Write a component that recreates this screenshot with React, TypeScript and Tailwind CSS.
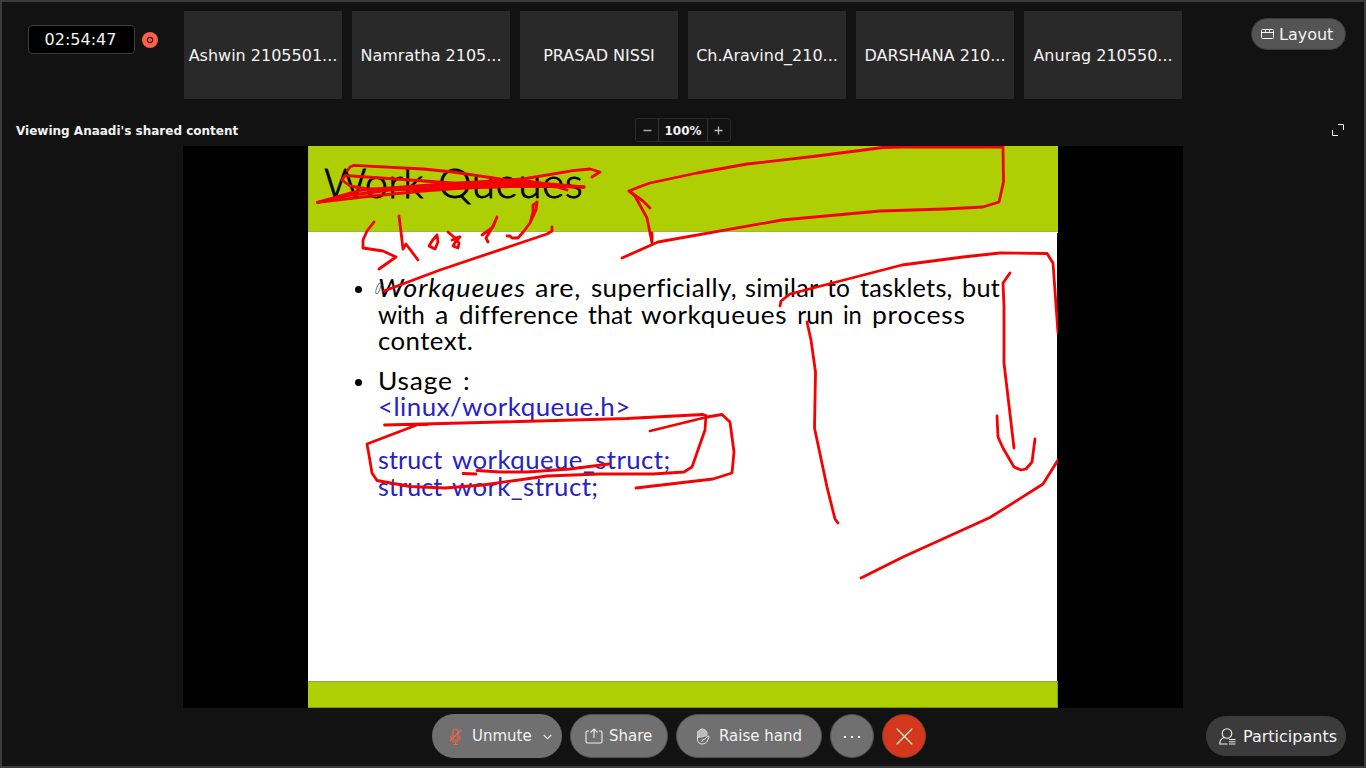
import { useLayoutEffect, useRef } from "react";

const participants = [
  "Ashwin 2105501...",
  "Namratha 2105...",
  "PRASAD NISSI",
  "Ch.Aravind_210...",
  "DARSHANA 210...",
  "Anurag 210550...",
];

/* Fills the given width: a small part by letter spacing, the rest by widening the glyphs. */
function Word({ text, width, italic = false }: { text: string; width: number; italic?: boolean }) {
  const outer = useRef<HTMLSpanElement>(null);
  const inner = useRef<HTMLSpanElement>(null);
  useLayoutEffect(() => {
    if (!outer.current || !inner.current) return;
    const el = inner.current;
    el.style.transform = "none";
    el.style.letterSpacing = "0px";
    const natural = el.offsetWidth;
    const extra = (width - natural) / text.length;
    el.style.letterSpacing = `${extra * 0.4}px`;
    el.style.transform = `scaleX(${width / (natural + extra * 0.4 * text.length)})`;
    outer.current.style.width = `${width}px`;
  }, [text, width]);
  return (
    <span ref={outer} className="inline-block">
      <span ref={inner} className={italic ? "inline-block origin-left italic" : "inline-block origin-left"}>
        {text}
      </span>
    </span>
  );
}

type W = [string, number, boolean?];

function Line({ words, className }: { words: W[]; className: string }) {
  return (
    <div className={`flex h-[26.5px] justify-between leading-[26.5px] whitespace-nowrap ${className}`}>
      {words.map(([t, w, i]) => (
        <Word key={t} text={t} width={w} italic={i} />
      ))}
    </div>
  );
}

function Bullet() {
  return <span className="mt-[11px] ml-[47px] mr-[16px] size-[7px] shrink-0 rounded-full bg-black" />;
}

const strokes = [
  "M347.500 170.500 L350 167 L354 165.300 L423 169 L453 172 L510 180.500 L584 187",
  "M317.500 202.300 L350 193 L363 190 L443 184 L523 179 L573 170.700 L590 169 L600 172 L592 177",
  "M584 187 L523 185 L453 183 L345 175.500 L342 180 L350 186 L367 189 L410 189 L477 187 L523 184 L557 187 L567 190",
  "M317.500 202.300 L363 197 L423 191 L463 188 L523 186 L584 187",
  "M317.500 202.300 L352 195 L390 190 L440 187 L500 184",
  "M374 222 L367 231 L363 240 L363 248 L383 251 L396 257 L379 269",
  "M399 216 L401 232 L403 249 L406 244 L418 260",
  "M437 235 L438 242 L435 249 L429 246 L432 241 L437 235",
  "M448 232 L455 238 L459 237 M460 237 L452 240 M455 238 L459 243 L458 248 L453 246 L456 241 L460 237",
  "M497 217 L493 227 L482 235 M497 217 L492 228 L486 238 L488 242",
  "M537 202 L533 205 L533 212 L530 223 L524 231 L518 238 L512 238 L510 236 L507 236 M537 202 L536 210 L530 223",
  "M384 291 L440 270 L547 234 L552 231 L552 227",
  "M650 208 L643 201 L629 191 L639 187 L650 183 L697 173 L747 164 L817 156 L883 147.500 L903 147 L1003 147 L1003.500 182 L999 202 L983 207 L945 209 L880 211 L782 220 L658 242 L622 258",
  "M629 191 L635 196 L647 218 L652 243 L652 233",
  "M780 306 L781 301 L790 294 L902 265 L963 257 L1000 253 L1047 253.500 L1053 263 L1058 333",
  "M1058 460 L1043 484 L990 517.500 L903 557 L861 578",
  "M1010 273 L1003 283 L1004 307 L1004 363 L1014 448",
  "M997 416 L998 437 L1003 448 L1014 467 L1021 470 L1026 469 L1032 462 L1035 439",
  "M807 322 L811 340 L815.500 372 L814.500 428 L827 487 L835 519 L838 523",
  "M384.500 425 L520 421.500 L627 418.500 L703 414.500 L706 415.500 L705 430 L692 467 L684 472 L653 474 L600 474 L547 476 L483 485 L445 488 L410 486.500 L377 480.500 L372 473 L369 455 L367 444 L418 424.500 L428 424.500",
  "M650 431 L707 417 L722 414.500 L730 422 L734 452 L732 473 L713 479 L636 488",
  "M463 473.500 L476 474",
  "M477 470.500 L500 472 L527 472 L570 469 L609 464",
];

function Slide() {
  return (
    <div className="relative flex h-[562px] w-[750px] flex-col overflow-hidden bg-white font-['Lato',sans-serif]">
      <div className="h-[86px] shrink-0 border-b border-l border-[#9dba35] bg-[#adcf03] pt-[12px] pl-[15px] text-[41px] leading-[50px] font-light text-black [-webkit-text-stroke:0.8px_#000]">
        <div className="flex w-[259px] justify-between whitespace-nowrap">
          <Word text="Work" width={100} />
          <Word text="Queues" width={145} />
        </div>
      </div>
      <div className="mr-px flex grow flex-col bg-white pt-[43px] text-[24.5px] text-black">
        <div className="flex">
          <Bullet />
          <div>
            <Line
              className="w-[622px]"
              words={[["Workqueues", 148, true], ["are,", 46], ["superficially,", 145], ["similar", 73], ["to", 23], ["tasklets,", 93], ["but", 38]]}
            />
            <Line
              className="w-[588px]"
              words={[["with", 47], ["a", 14], ["difference", 119], ["that", 44], ["workqueues", 146], ["run", 36], ["in", 19], ["process", 94]]}
            />
            <Line className="w-[95px]" words={[["context.", 95]]} />
          </div>
        </div>
        <div className="mt-[13px] flex">
          <Bullet />
          <div>
            <Line className="w-[92px]" words={[["Usage", 75], [":", 7]]} />
            <div className="text-[#2722c4]">
              <Line className="w-[253px]" words={[["<linux/workqueue.h>", 253]]} />
              <div className="h-[26.5px]" />
              <Line className="w-[293px]" words={[["struct", 64], ["workqueue_struct;", 219]]} />
              <Line className="w-[220px]" words={[["struct", 64], ["work_struct;", 146]]} />
            </div>
          </div>
        </div>
      </div>
      <div className="h-[27px] shrink-0 border border-t-[#82aa50] border-r-[#82a020] border-b-[#7d9a10] border-l-[#adcf03] bg-[#adcf03]" />
      <svg viewBox="308 146 750 562" className="absolute inset-0 h-[562px] w-[750px]" fill="none">
        <path d="M1057.500 233V681" stroke="#000" strokeWidth="1" />
        <ellipse cx="378.3" cy="288.5" rx="1.7" ry="5.5" transform="rotate(20 378.3 288.5)" fill="#fff" stroke="#68727a" strokeWidth="1" />
        <path d="M440 186 L500 181 L523 179 L550 183 L584 187 L510 188 L440 190 Z" fill="#fa0000" />
        {strokes.map((d) => (
          <path key={d} d={d} stroke="#f40202" strokeWidth="2.8" strokeLinecap="round" strokeLinejoin="round" />
        ))}
      </svg>
    </div>
  );
}

export default function App() {
  return (
    <div className="flex h-[768px] w-[1366px] flex-col overflow-hidden border-2 border-[#3b3b3b] bg-[#121212] font-['DejaVu_Sans',sans-serif] text-[16px] text-[#f3f3f3]">
      <header className="flex h-[97px] shrink-0 items-start">
        <div className="flex w-[180px] shrink-0 items-center pt-[23px] pl-[26px]">
          <div className="flex h-[29px] w-[107px] items-center justify-center rounded border border-[#3c3c3c] bg-black pr-[2px]">02:54:47</div>
          <svg className="ml-[7px] size-4" viewBox="0 0 16 16">
            <circle cx="8" cy="8" r="8" fill="#fa6148" />
            <circle cx="8" cy="8" r="2.6" fill="none" stroke="#301612" strokeWidth="1.1" />
          </svg>
        </div>
        <div className="ml-[2px] flex gap-[10px] pt-[9px]">
          {participants.map((p) => (
            <div key={p} className="flex h-[88px] w-[158px] items-center justify-center bg-[#292929] pt-[2px] whitespace-nowrap">
              {p}
            </div>
          ))}
        </div>
        <button className="mt-[16px] ml-[69px] flex h-[32px] w-[95px] items-center rounded-full border border-[#3c3c3c] bg-[#545454] pl-[9px]">
          <svg className="mr-[5px] h-[12px] w-[13px] shrink-0" viewBox="0 0 13 12" fill="none" stroke="#f5f5f5" strokeWidth="1">
            <rect x=".5" y="1.5" width="12" height="9" rx="1" />
            <path d="M.5 4.5h12M4.5 1.5v3M8.5 1.5v3" />
          </svg>
          <span className="pt-px">Layout</span>
        </button>
      </header>

      <div className="flex h-[47px] shrink-0 items-center pt-[15px] text-[12px] font-bold">
        <div className="w-[619px] pt-[2px] pl-[14px]">Viewing Anaadi's shared content</div>
        <div className="ml-[14px] flex h-6 w-[96px] items-stretch rounded-[3px] border border-[#292929]">
          <button className="flex w-[23px] items-center justify-center border-r border-[#333]">
            <svg viewBox="0 0 9 9" className="size-[9px]" stroke="#aaa" strokeWidth="1.5">
              <path d="M.5 4.5h8" />
            </svg>
          </button>
          <span className="flex w-[49px] items-center justify-center border-r border-[#333] pt-[2px]">100%</span>
          <button className="flex grow items-center justify-center pr-px">
            <svg viewBox="0 0 9 9" className="size-[9px]" stroke="#bbb" strokeWidth="1.3">
              <path d="M.5 4.5h8M4.5 .5v8" />
            </svg>
          </button>
        </div>
        <svg className="ml-[601px] size-3" viewBox="0 0 12 12" fill="none" stroke="#f5f5f5" strokeWidth="1">
          <path d="M6 .5h5.500v5.500M.5 6v5.500h5.500" />
        </svg>
      </div>

      <main className="ml-[181px] flex h-[562px] w-[1000px] shrink-0 bg-black pl-[125px]">
        <Slide />
      </main>

      <footer className="flex h-[58px] shrink-0 items-start pt-[6px] pl-[430px] text-[15px]">
        <button className="flex h-[44px] w-[130px] items-center rounded-full bg-[#707070] pl-[17px]">
          <svg className="mt-[2px] mr-[10px] h-[18px] w-[13px]" viewBox="0 0 13 18" fill="none" stroke="#f4634c" strokeWidth="1.1">
            <rect x="4" y="1" width="5" height="11" rx="2.5" />
            <path d="M2 7.500v2a4.500 4.500 0 0 0 9 0V7.500M6.500 14v2.500M4 16.500h5M.8 13L12.300 2" />
          </svg>
          <span>Unmute</span>
          <svg className="mt-[2px] ml-[11px] h-[6px] w-[9px]" viewBox="0 0 9 6" fill="none" stroke="#eee" strokeWidth="1.1">
            <path d="M.7 1l3.800 3.800L8.300 1" />
          </svg>
        </button>
        <button className="ml-[8px] flex h-[44px] w-[98px] items-center rounded-full border border-[#505050] bg-[#707070] pl-[14px]">
          <svg className="mr-[6px] h-[16px] w-[18px]" viewBox="0 0 18 16" fill="none" stroke="#f0f0f0" strokeWidth="1.1">
            <path d="M4 3H2.500Q1 3 1 4.500V13.500Q1 15 2.500 15H15.500Q17 15 17 13.500V4.500Q17 3 15.500 3H14M9 10V1M5.500 4.500L9 1l3.500 3.500" />
          </svg>
          <span>Share</span>
        </button>
        <button className="ml-[8px] flex h-[44px] w-[146px] items-center rounded-full border border-[#505050] bg-[#707070] pl-[19px]">
          <svg className="mt-px mr-[9px] h-[17px] w-[14px]" viewBox="0 0 14 17" fill="none" stroke="#e8e8e8" strokeWidth="1" strokeLinecap="round" strokeLinejoin="round">
            <path d="M1.500 9V4.300Q1.600 2.500 3.400 3Q3.500 1.400 5 1.400Q6.200 0 7.600 1.400Q9.500 1.400 9.600 3Q11 3 11 4.500V7.500L5.500 9Z" fill="#bdbdbd" stroke="#d0d0d0" />
            <path d="M1.500 9v2.500A5 5 0 0 0 6.500 16Q9.500 16 11 13.500L13 9.200Q13.200 7.700 11.800 8L8.500 11.500Q6 11 5.800 13.500" />
          </svg>
          <span>Raise hand</span>
        </button>
        <button className="ml-[8px] flex size-[44px] items-center justify-center gap-[5px] rounded-full border border-[#505050] bg-[#707070]">
          <span className="mt-[2px] size-[2px] bg-white" />
          <span className="mt-[2px] size-[2px] bg-white" />
          <span className="mt-[2px] size-[2px] bg-white" />
        </button>
        <button className="ml-[8px] flex size-[44px] items-center justify-center rounded-full border border-[#7a4038] bg-[#d4371b]">
          <svg className="mt-px size-[17px]" viewBox="0 0 17 17" stroke="#fff" strokeWidth="1.2">
            <path d="M.7 .7L16.300 16.300M16.300 .7L.7 16.300" />
          </svg>
        </button>
        <button className="mt-[2px] ml-[280px] flex h-[40px] w-[140px] items-center rounded-full bg-[#3b3b3b] pl-[13px] text-[16px]">
          <svg className="mr-[7px] h-[17px] w-[17px]" viewBox="0 0 17 17" fill="none" stroke="#f0f0f0" strokeWidth="1.1">
            <circle cx="8" cy="5.500" r="4.800" />
            <path d="M5.300 9.500Q.8 11 .8 15.500V16H8.500M10 11.500h6.500M10 13.700h6.500M10 16h6.500" />
          </svg>
          <span className="pt-px whitespace-nowrap">Participants</span>
        </button>
      </footer>
    </div>
  );
}
